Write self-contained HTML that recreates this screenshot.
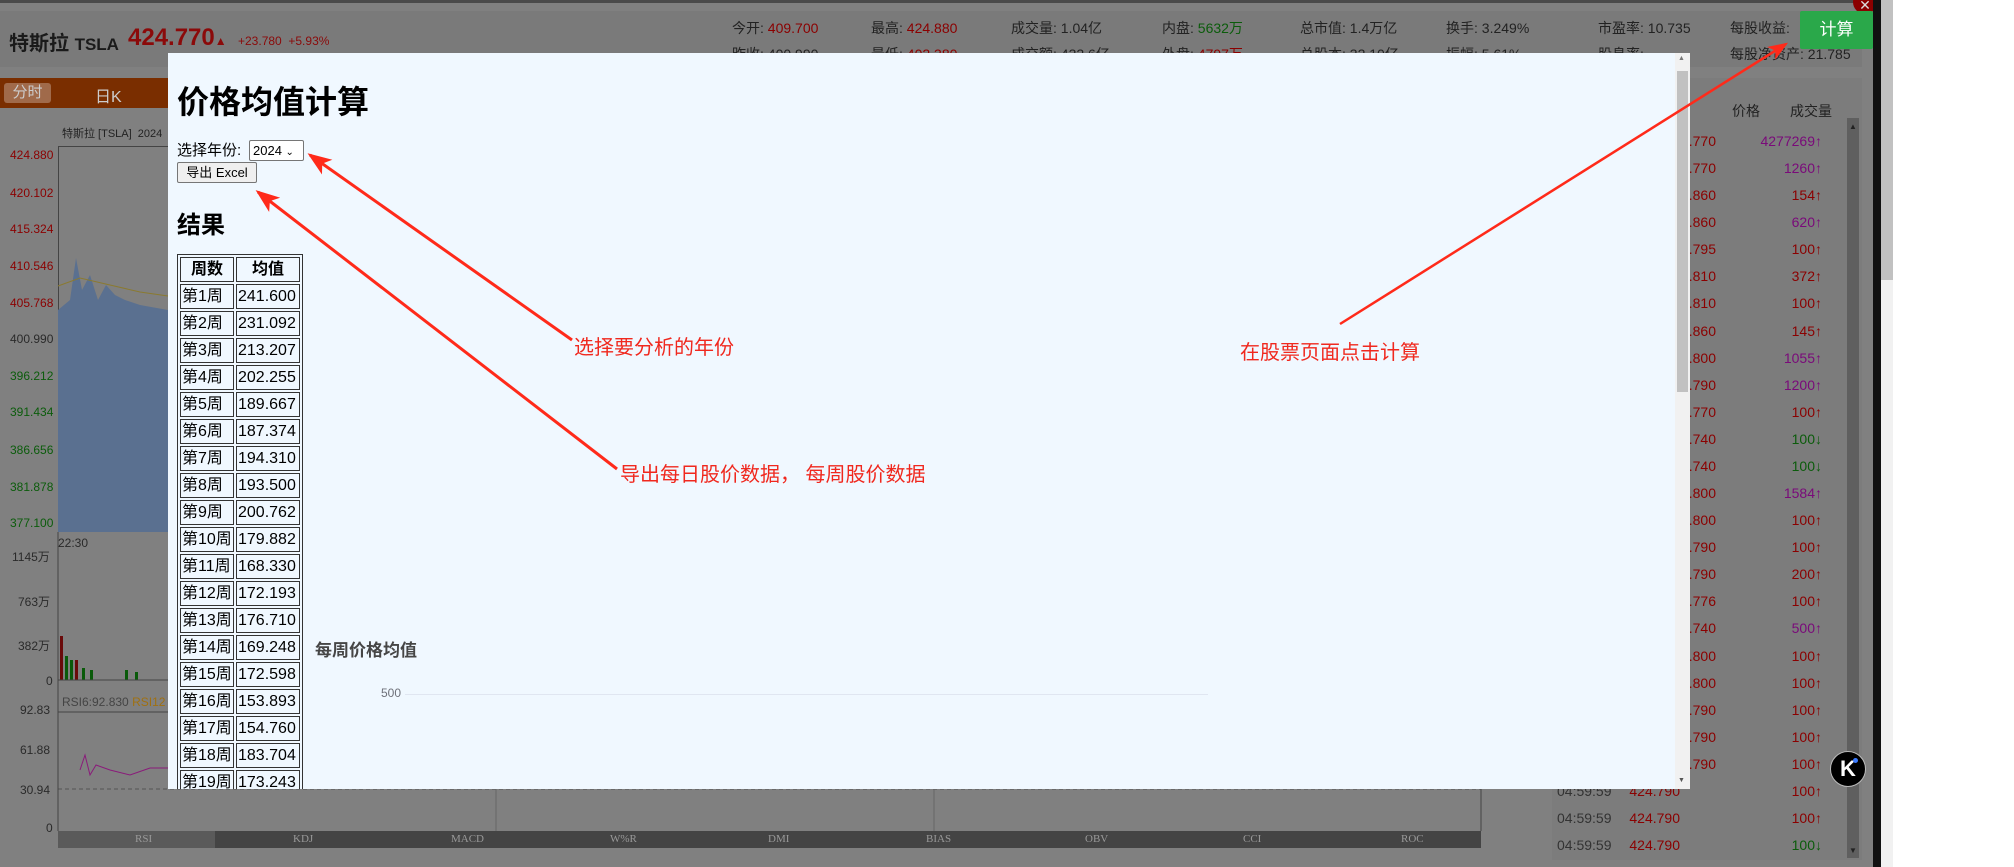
<!DOCTYPE html>
<html><head><meta charset="utf-8"><style>
*{margin:0;padding:0;box-sizing:border-box}
body{width:2014px;height:867px;overflow:hidden;background:#808080;position:relative;font-family:"Liberation Sans","Noto Sans CJK SC",sans-serif}
.a{position:absolute;white-space:nowrap}
.lbl{font-size:14px;color:#222}
.r{color:#8b0000}.g{color:#0b5c0b}.p{color:#7a0a7a}.k{color:#2a2a2a}
.ax{font-size:12px}
table.t{position:absolute;left:177px;top:254px;border:1px solid #333;border-spacing:2px;font-size:16px}
table.t td,table.t th{border:1px solid #333;height:25px;padding:0 1px;text-align:left;font-weight:normal;line-height:23px}
table.t th{font-weight:bold;text-align:center}
</style></head><body>
<div class="a" style="left:0;top:0;width:1873px;height:3px;background:#4a4a4a"></div>
<div class="a" style="left:0;top:11px;width:1862px;height:56px;background:#7a7a7a"></div>
<div class="a" style="left:9px;top:27px;font-size:20px;font-weight:bold;color:#1a1a1a">特斯拉 <span style="font-size:17px">TSLA</span></div>
<div class="a" style="left:128px;top:24px;font-size:24px;font-weight:bold;color:#8b0a0a">424.770<span style="font-size:12px">▲</span></div>
<div class="a" style="left:238px;top:34px;font-size:12px;color:#8b0a0a">+23.780 &nbsp;+5.93%</div>
<div class="a lbl" style="left:732px;top:18px">今开: <span class="r">409.700</span></div>
<div class="a lbl" style="left:871px;top:18px">最高: <span class="r">424.880</span></div>
<div class="a lbl" style="left:1011px;top:18px">成交量: 1.04亿</div>
<div class="a lbl" style="left:1162px;top:18px">内盘: <span class="g">5632万</span></div>
<div class="a lbl" style="left:1300px;top:18px">总市值: 1.4万亿</div>
<div class="a lbl" style="left:1446px;top:18px">换手: 3.249%</div>
<div class="a lbl" style="left:1598px;top:18px">市盈率: 10.735</div>
<div class="a lbl" style="left:1730px;top:18px">每股收益:</div>
<div class="a lbl" style="left:732px;top:44px">昨收: 400.990</div>
<div class="a lbl" style="left:871px;top:44px">最低: <span class="r">402.380</span></div>
<div class="a lbl" style="left:1011px;top:44px">成交额: 432.6亿</div>
<div class="a lbl" style="left:1162px;top:44px">外盘: <span class="r">4797万</span></div>
<div class="a lbl" style="left:1300px;top:44px">总股本: 32.10亿</div>
<div class="a lbl" style="left:1446px;top:44px">振幅: 5.61%</div>
<div class="a lbl" style="left:1598px;top:44px">股息率:</div>
<div class="a lbl" style="left:1730px;top:44px">每股净资产: 21.785</div>
<div class="a" style="left:1853px;top:-10px;width:24px;height:24px;border-radius:50%;background:#8b0000;color:#ddd;font-size:14px;text-align:center;line-height:30px">✕</div>
<div class="a" style="left:1800px;top:11px;width:73px;height:38px;background:#2aa84a;color:#fff;font-size:17px;text-align:center;line-height:38px;border-radius:2px">计算</div>
<div class="a" style="left:1873px;top:0;width:8px;height:867px;background:#111"></div>
<div class="a" style="left:1881px;top:0;width:133px;height:867px;background:#fff"></div>
<div class="a" style="left:1881px;top:0;width:12px;height:280px;background:#c1c1c1"></div>
<div class="a" style="left:1881px;top:280px;width:12px;height:587px;background:#f1f1f1"></div>
<div class="a" style="left:0;top:78px;width:168px;height:30px;background:#7a2e00"></div>
<div class="a" style="left:4px;top:83px;width:47px;height:20px;background:#a06a4a;border-radius:3px;color:#ccc;font-size:15px;text-align:center;line-height:20px">分时</div>
<div class="a" style="left:95px;top:83px;color:#ccc;font-size:16px">日K</div>
<div class="a" style="left:62px;top:125px;font-size:11px;color:#222">特斯拉 [TSLA]&nbsp; 2024</div>
<div class="a" style="left:58px;top:146px;width:1px;height:386px;background:#444"></div>
<div class="a" style="left:58px;top:146px;width:120px;height:1px;background:#444"></div>
<div class="a ax r" style="left:10px;top:148px">424.880</div>
<div class="a ax r" style="left:10px;top:186px">420.102</div>
<div class="a ax r" style="left:10px;top:222px">415.324</div>
<div class="a ax r" style="left:10px;top:259px">410.546</div>
<div class="a ax r" style="left:10px;top:296px">405.768</div>
<div class="a ax k" style="left:10px;top:332px">400.990</div>
<div class="a ax g" style="left:10px;top:369px">396.212</div>
<div class="a ax g" style="left:10px;top:405px">391.434</div>
<div class="a ax g" style="left:10px;top:443px">386.656</div>
<div class="a ax g" style="left:10px;top:480px">381.878</div>
<div class="a ax g" style="left:10px;top:516px">377.100</div>
<div class="a ax k" style="left:58px;top:536px">22:30</div>
<div class="a ax k" style="left:12px;top:548px">1145万</div>
<div class="a ax k" style="left:18px;top:593px">763万</div>
<div class="a ax k" style="left:18px;top:637px">382万</div>
<div class="a ax k" style="left:46px;top:674px">0</div>
<div class="a ax" style="left:62px;top:695px;color:#444">RSI6:92.830 <span style="color:#a07010">RSI12</span></div>
<div class="a ax k" style="left:20px;top:703px">92.83</div>
<div class="a ax k" style="left:20px;top:743px">61.88</div>
<div class="a ax k" style="left:20px;top:783px">30.94</div>
<div class="a ax k" style="left:46px;top:821px">0</div>
<svg class="a" style="left:0;top:0" width="1881" height="867">
<path d="M58,310 L70,300 L76,258 L82,290 L90,275 L98,300 L106,285 L115,295 L125,300 L140,305 L168,310 L168,532 L58,532Z" fill="#5a7090"/>
<path d="M58,286 L80,278 L110,285 L140,292 L168,296" stroke="#8a7a30" fill="none"/>
<g fill="#6a0a0a"><rect x="60" y="636" width="3" height="44"/><rect x="75" y="660" width="3" height="20"/></g>
<g fill="#0a5a0a"><rect x="65" y="656" width="3" height="24"/><rect x="70" y="660" width="3" height="20"/><rect x="82" y="668" width="3" height="12"/><rect x="90" y="670" width="3" height="10"/><rect x="125" y="670" width="3" height="10"/><rect x="135" y="672" width="3" height="8"/></g>
<line x1="58" y1="680" x2="168" y2="680" stroke="#444"/>
<line x1="58" y1="712" x2="168" y2="712" stroke="#444"/>
<line x1="58" y1="789" x2="1481" y2="789" stroke="#555" stroke-dasharray="4,3"/>
<line x1="58" y1="532" x2="58" y2="831" stroke="#444"/>
<line x1="1481" y1="789" x2="1481" y2="831" stroke="#444"/>
<line x1="496" y1="789" x2="496" y2="831" stroke="#666"/>
<line x1="934" y1="789" x2="934" y2="831" stroke="#666"/>
<path d="M80,770 L85,755 L90,775 L96,765 L110,770 L130,775 L150,768 L168,768" stroke="#8a1a7a" fill="none"/>
</svg>
<div class="a" style="left:58px;top:831px;width:1423px;height:17px;background:#444"></div>
<div class="a" style="left:58px;top:831px;width:157px;height:17px;background:#5a5a5a"></div>
<div class="a" style="left:58px;top:831px;width:1423px;height:17px;font-family:'Liberation Serif',serif;font-size:11px;color:#999;line-height:17px">
<span class="a" style="left:77px">RSI</span><span class="a" style="left:235px">KDJ</span><span class="a" style="left:393px">MACD</span><span class="a" style="left:552px">W%R</span><span class="a" style="left:710px">DMI</span><span class="a" style="left:868px">BIAS</span><span class="a" style="left:1027px">OBV</span><span class="a" style="left:1185px">CCI</span><span class="a" style="left:1343px">ROC</span></div>
<div class="a" style="left:1552px;top:78px;width:310px;height:782px;background:#7c7c7c"></div>
<div class="a lbl" style="left:1732px;top:101px">价格</div>
<div class="a lbl" style="left:1790px;top:101px">成交量</div>
<div class="a" style="left:1847px;top:118px;width:12px;height:740px;background:#5f5f5f"></div>
<div class="a" style="left:1849px;top:122px;font-size:8px;color:#222">▲</div>
<div class="a" style="left:1849px;top:846px;font-size:8px;color:#222">▼</div>
<div id="rp"></div>
<div class="a" style="left:1830px;top:751px;width:36px;height:36px;border-radius:50%;background:#000;border:1px solid #bbb;color:#fff;font-weight:bold;font-size:22px;text-align:center;line-height:34px">K<span style="position:absolute;left:22px;top:6px;width:5px;height:5px;border-radius:50%;background:#3a7aff"></span></div>
<div class="a" style="left:168px;top:53px;width:1522px;height:736px;background:#f0f8ff;overflow:hidden">
<div class="a" style="left:9px;top:24px;font-size:32px;font-weight:bold;color:#000">价格均值计算</div>
<div class="a" style="left:9px;top:88px;font-size:15px;color:#000;line-height:20px">选择年份:</div>
<div class="a" style="left:81px;top:87px;width:55px;height:21px;border:1px solid #767676;background:#fff;font-size:13px;line-height:19px;padding-left:3px;border-radius:2px">2024 <span style="font-size:10px">⌄</span></div>
<div class="a" style="left:9px;top:109px;width:80px;height:21px;border:1px solid #767676;background:#efefef;font-size:13px;line-height:19px;text-align:center;border-radius:2px">导出 Excel</div>
<div class="a" style="left:9px;top:152px;font-size:24px;font-weight:bold">结果</div>
<div class="a" style="left:147px;top:583px;font-size:17px;font-weight:bold;color:#464646">每周价格均值</div>
<div class="a" style="left:213px;top:633px;font-size:12px;color:#6e7079">500</div>
<div class="a" style="left:237px;top:641px;width:803px;height:1px;background:#e0e6f1"></div>
<div class="a" style="left:1507px;top:0;width:15px;height:736px;background:#f1f1f1"></div>
<div class="a" style="left:1509px;top:18px;width:11px;height:321px;background:#c1c1c1"></div>
<div class="a" style="left:1510px;top:2px;font-size:7px;color:#777">▲</div>
<div class="a" style="left:1510px;top:724px;font-size:7px;color:#555">▼</div>
</div>
<div class="a" style="left:0;top:0;width:1690px;height:789px;overflow:hidden;pointer-events:none">
<table class="t"><tr><th style="width:54px">周数</th><th style="width:64px">均值</th></tr>
<tr><td>第1周</td><td>241.600</td></tr><tr><td>第2周</td><td>231.092</td></tr><tr><td>第3周</td><td>213.207</td></tr><tr><td>第4周</td><td>202.255</td></tr><tr><td>第5周</td><td>189.667</td></tr><tr><td>第6周</td><td>187.374</td></tr><tr><td>第7周</td><td>194.310</td></tr><tr><td>第8周</td><td>193.500</td></tr><tr><td>第9周</td><td>200.762</td></tr><tr><td>第10周</td><td>179.882</td></tr><tr><td>第11周</td><td>168.330</td></tr><tr><td>第12周</td><td>172.193</td></tr><tr><td>第13周</td><td>176.710</td></tr><tr><td>第14周</td><td>169.248</td></tr><tr><td>第15周</td><td>172.598</td></tr><tr><td>第16周</td><td>153.893</td></tr><tr><td>第17周</td><td>154.760</td></tr><tr><td>第18周</td><td>183.704</td></tr><tr><td>第19周</td><td>173.243</td></tr><tr><td>第20周</td><td>176.000</td></tr></table>
</div>
<div class="a" style="left:574px;top:331px;font-size:20px;color:#f0281e">选择要分析的年份</div>
<div class="a" style="left:620px;top:458px;font-size:20px;color:#f0281e">导出每日股价数据， 每周股价数据</div>
<div class="a" style="left:1240px;top:336px;font-size:20px;color:#f0281e">在股票页面点击计算</div>
<svg class="a" style="left:0;top:0" width="2014" height="867">
<defs><marker id="h" markerWidth="8" markerHeight="6" refX="7" refY="3" orient="auto" markerUnits="strokeWidth"><path d="M0,0 L8,3 L0,6 L2,3z" fill="#ff2a1a"/></marker></defs>
<line x1="572" y1="340" x2="310" y2="155" stroke="#ff2a1a" stroke-width="3" marker-end="url(#h)"/>
<line x1="617" y1="469" x2="258" y2="192" stroke="#ff2a1a" stroke-width="3" marker-end="url(#h)"/>
<line x1="1340" y1="324" x2="1786" y2="44" stroke="#ff2a1a" stroke-width="2.5" marker-end="url(#h)"/>
</svg>
<script>
var pr=['.770','.770','.860','.860','.795','.810','.810','.860','.800','.790','.770','.740','.740','.800','.800','.790','.790','.776','.740','.800','.800','.790','.790','.790','.790','.790','.790'];
var vo=[['4277269','p'],['1260','p'],['154','r'],['620','p'],['100','r'],['372','r'],['100','r'],['145','r'],['1055','p'],['1200','p'],['100','r'],['100','g'],['100','g'],['1584','p'],['100','r'],['100','r'],['200','r'],['100','r'],['500','p'],['100','r'],['100','r'],['100','r'],['100','r'],['100','r'],['100','r'],['100','r'],['100','g']];
var h='';
for(var i=0;i<27;i++){var y=133+i*27.08;
h+='<div class="a" style="left:1557px;top:'+y+'px;font-size:14px;color:#333">04:59:59</div>';
h+='<div class="a r" style="right:'+(i<24?(2014-1716):(2014-1680))+'px;top:'+y+'px;font-size:14px">424'+pr[i]+'</div>';
var c=vo[i][1];h+='<div class="a '+c+'" style="right:'+(2014-1822)+'px;top:'+y+'px;font-size:14px">'+vo[i][0]+'<b>'+(c=='g'?'↓':'↑')+'</b></div>';}
document.getElementById('rp').outerHTML=h;
</script>
</body></html>
